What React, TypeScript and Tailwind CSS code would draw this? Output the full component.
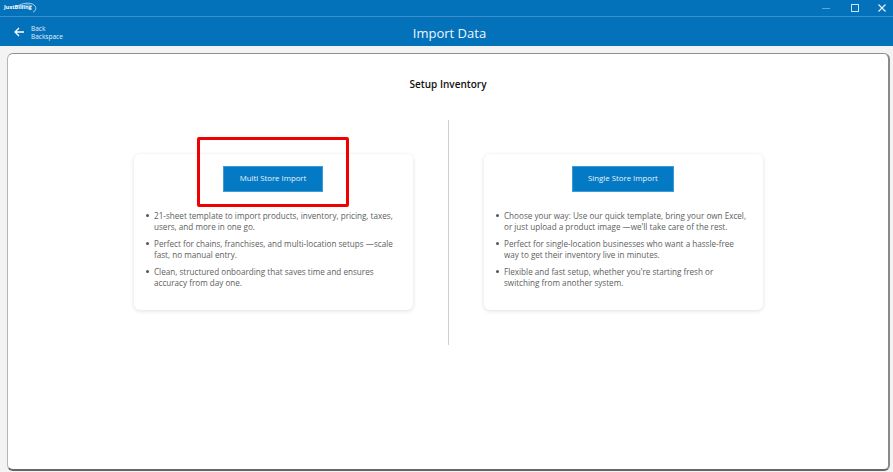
import React from "react";

const multiStore = [
  "21-sheet template to import products, inventory, pricing, taxes, users, and more in one go.",
  "Perfect for chains, franchises, and multi-location setups —scale fast, no manual entry.",
  "Clean, structured onboarding that saves time and ensures accuracy from day one.",
];

const singleStore = [
  "Choose your way: Use our quick template, bring your own Excel, or just upload a product image —we'll take care of the rest.",
  "Perfect for single-location businesses who want a hassle-free way to get their inventory live in minutes.",
  "Flexible and fast setup, whether you're starting fresh or switching from another system.",
];

const ImportCard = ({ label, items }: { label: string; items: string[] }) => (
  <div className="w-[279px] h-[156px] bg-white rounded-[6px] shadow-[0_1px_4px_rgba(0,0,0,0.13)] pt-[12px] pl-[12px] pr-[13px]">
    <div className="flex justify-center">
      <button className="h-[26px] px-[15.5px] bg-[#0479c4] border border-[#3d9bd6] text-[#eaf4fb] text-[7.8px] leading-none">
        {label}
      </button>
    </div>
    <ul className="mt-[18px] text-[#606060] text-[8.15px] leading-[11.3px]">
      {items.map((item, index) => (
        <li key={index} className="flex mb-[5.5px]">
          <span className="w-[8px] shrink-0 flex pt-[4px]">
            <span className="w-[3px] h-[3px] rounded-full bg-[#555]" />
          </span>
          <span>{item}</span>
        </li>
      ))}
    </ul>
  </div>
);

const App = () => {
  return (
    <div
      className="relative w-[893px] h-[472px] overflow-hidden bg-[#f3f3f3] flex flex-col"
      style={{ fontFamily: '"Open Sans", "Noto Sans", sans-serif' }}
    >
      {/* title bar */}
      <div className="h-[17px] bg-[#0472bb] border-b border-[#3c8fcb] flex items-center justify-between pl-[4px]">
        <div className="relative flex items-center">
          <span className="text-white text-[5.5px] font-bold leading-none">JustBilling</span>
          <svg className="absolute left-[12px] -top-[3px]" width="22" height="12" viewBox="0 0 22 12" fill="none">
            <path d="M2 4C6 1 14 0 18 3c3 2 2 6-1 7" stroke="#cfe5f5" strokeWidth="0.8" />
            <path d="M7 4c3-1.500 7-1.500 9 0" stroke="#cfe5f5" strokeWidth="0.6" />
          </svg>
        </div>
        <div className="flex items-center">
          <svg width="12" height="12" viewBox="0 0 12 12" className="mr-[17px]">
            <path d="M2 6.500h8" stroke="#5fa6d8" strokeWidth="1" />
          </svg>
          <svg width="12" height="12" viewBox="0 0 12 12" className="mr-[15px]">
            <rect x="2.500" y="2.500" width="7" height="7" fill="none" stroke="#cfe5f5" strokeWidth="1" />
          </svg>
          <svg width="12" height="12" viewBox="0 0 12 12" className="mr-[5px]">
            <path d="M2.500 2.500l7 7M9.500 2.500l-7 7" stroke="#e6f1f9" strokeWidth="1.200" />
          </svg>
        </div>
      </div>

      {/* header */}
      <div className="relative h-[29px] bg-[#0472bb] flex items-center pl-[13px]">
        <svg width="12" height="12" viewBox="0 0 12 12" fill="none">
          <path d="M11 6H2M6 2 2 6l4 4" stroke="white" strokeWidth="1.300" />
        </svg>
        <div className="ml-[6px] mt-[2px] text-[#e3f0f9] text-[6.5px] leading-[7.5px]">
          <div>Back</div>
          <div>Backspace</div>
        </div>
        <div className="absolute left-[6px] right-0 top-[10px] text-center text-[#eef6fb] text-[13px] leading-none">
          Import Data
        </div>
      </div>

      {/* panel */}
      <div className="flex-1 pr-[3px] pt-[7px] pl-[7px]">
        <div className="w-[883px] h-[418px] bg-white rounded-[6px] border border-[#b5b5b5] border-b-[2px] border-b-[#666] border-r-[2px] border-r-[#8a8a8a] border-t-[#8f8f8f] flex flex-col">
          <div className="text-center text-[#111] text-[10px] font-semibold leading-none mt-[25px] mb-[31px]">
            Setup Inventory
          </div>
          <div className="flex pl-[126px]">
            <div className="h-[225px] w-[314px] pt-[34px]">
              <ImportCard label="Multi Store Import" items={multiStore} />
            </div>
            <div className="w-px h-[225px] bg-[#cfcfcf]" />
            <div className="h-[225px] w-[314px] pl-[35px] pt-[34px]">
              <ImportCard label="Single Store Import" items={singleStore} />
            </div>
          </div>
        </div>
      </div>

      {/* annotation */}
      <div className="absolute left-[197px] top-[137px] w-[152px] h-[70px] border-[3px] border-[#f00000] rounded-[2px]" />
    </div>
  );
};

export default App;
